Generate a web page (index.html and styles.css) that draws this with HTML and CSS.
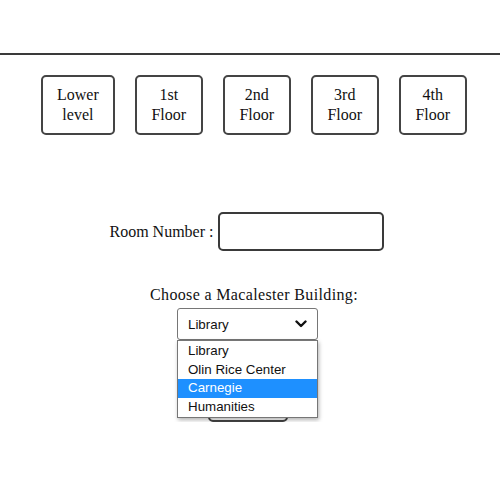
FILE: index.html
```html
<!DOCTYPE html>
<html>
<head>
<meta charset="utf-8">
<link rel="stylesheet" href="styles.css">
</head>
<body>
<header class="topbar"></header>
<nav class="floors">
  <button class="floor">Lower<br>level</button>
  <button class="floor">1st<br>Floor</button>
  <button class="floor">2nd<br>Floor</button>
  <button class="floor">3rd<br>Floor</button>
  <button class="floor">4th<br>Floor</button>
</nav>
<form class="search">
  <div class="room-row">
    <label class="room-label">Room Number :</label>
    <input class="room-input" type="text">
  </div>
  <div class="building">
    <div class="building-label">Choose a Macalester Building:</div>
    <div class="select-wrap">
      <div class="select">
        <span>Library</span>
        <svg class="chev" width="12" height="8" viewBox="0 0 12 8"><path d="M1.5 1.5 L6 6 L10.5 1.5" fill="none" stroke="#111" stroke-width="2.4" stroke-linecap="round" stroke-linejoin="round"/></svg>
      </div>
      <ul class="listbox">
        <li class="opt">Library</li>
        <li class="opt">Olin Rice Center</li>
        <li class="opt selected">Carnegie</li>
        <li class="opt">Humanities</li>
      </ul>
    </div>
    <button class="submit" type="button" aria-label="Submit"></button>
  </div>
</form>
</body>
</html>
```

FILE: styles.css
```css
* { box-sizing: border-box; }
html, body { margin: 0; padding: 0; background: #fff; }
body {
  font-family: "Liberation Serif", "Times New Roman", serif;
  font-size: 16px;
  color: #111;
  width: 500px;
}
.topbar {
  height: 55px;
  border-bottom: 2px solid #3a3a3a;
}
.floors {
  display: flex;
  gap: 20px;
  padding-left: 41px;
  margin-top: 20px;
}
.floor {
  font-family: "Liberation Serif", "Times New Roman", serif;
  font-size: 16px;
  line-height: 20px;
  color: #111;
  background: #fff;
  border: 2px solid #444;
  border-radius: 5px;
  padding: 8px 14px;
  min-width: 68px;
  height: 60px;
  text-align: center;
}
.search { margin-top: 77px; }
.room-row {
  display: flex;
  align-items: center;
  justify-content: center;
  gap: 4px;
  padding-right: 7px;
}
.room-label { font-size: 16px; }
.room-input {
  width: 166px;
  height: 39px;
  border: 2px solid #3a3a3a;
  border-radius: 5px;
  background: #fff;
  margin: 0;
}
.building {
  display: flex;
  flex-direction: column;
  align-items: center;
  margin-top: 35px;
}
.building-label {
  line-height: 18px;
  margin-left: 8px;
  letter-spacing: 0.35px;
}
.select-wrap {
  position: relative;
  margin-top: 4px;
  margin-right: 5px;
  width: 141px;
}
.select {
  display: flex;
  align-items: center;
  justify-content: space-between;
  height: 32px;
  border: 1px solid #767676;
  border-radius: 3px;
  padding: 0 10px 0 10px;
  font-family: "Liberation Sans", Arial, sans-serif;
  font-size: 13.33px;
  color: #111;
  background: #fff;
}
.listbox {
  position: absolute;
  top: 32px;
  left: 0;
  width: 141px;
  margin: 0;
  padding: 1px 0;
  list-style: none;
  background: #fff;
  border: 1px solid #767676;
  box-shadow: 1px 2px 4px rgba(0,0,0,0.3);
  z-index: 2;
  font-family: "Liberation Sans", Arial, sans-serif;
  font-size: 13.33px;
  color: #111;
}
.opt {
  height: 18.5px;
  line-height: 18px;
  padding-left: 10px;
}
.opt.selected {
  background: #1e90ff;
  color: #fff;
}
.submit {
  margin-top: 52px;
  margin-right: 5px;
  width: 80px;
  height: 30px;
  border: 2px solid #444;
  border-radius: 5px;
  background: #fff;
}
```
